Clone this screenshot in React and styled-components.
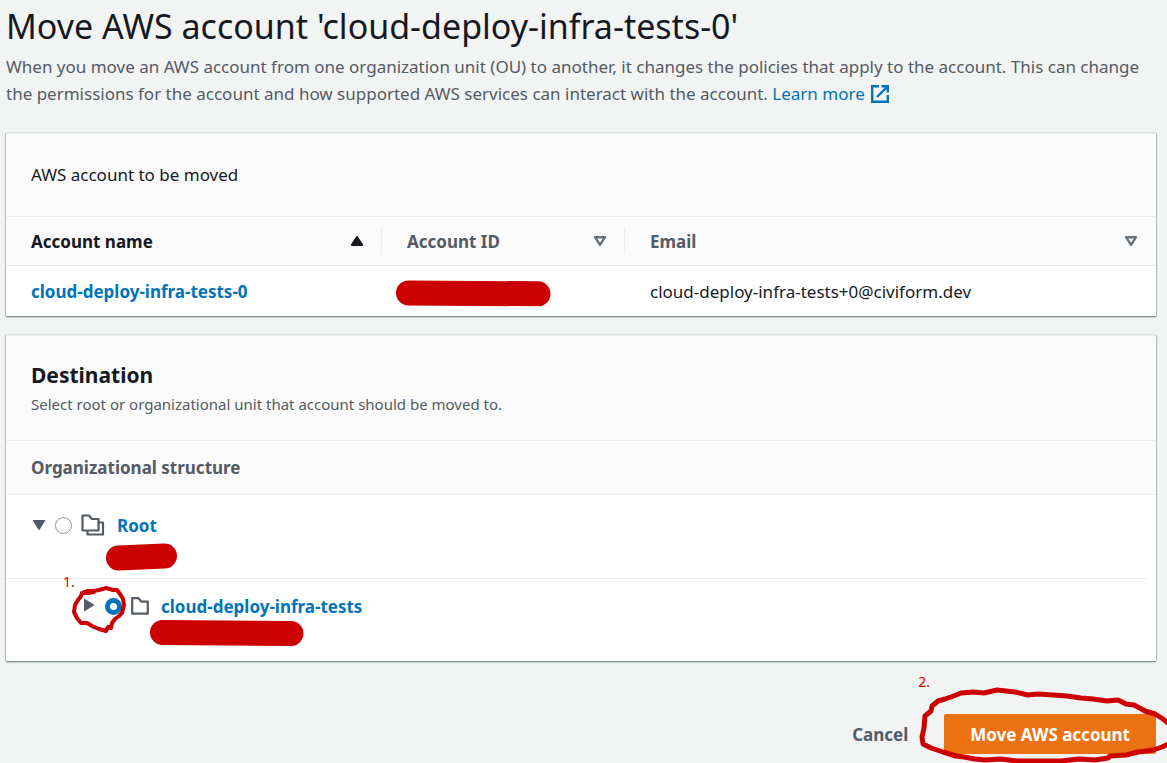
import React, { useState } from "react";
import styled, { createGlobalStyle } from "styled-components";

const GlobalStyle = createGlobalStyle`
  * { box-sizing: border-box; }
  body {
    margin: 0;
    background: #f2f3f3;
    color: #16191f;
    font-family: "Noto Sans", "Open Sans", sans-serif;
    font-size: 17px;
    line-height: 27px;
    overflow-x: hidden;
  }
  button, input { font: inherit; margin: 0; }
`;

const Page = styled.main`
  padding: 4px 11px 9px 6px;
  overflow: hidden;
`;

const Title = styled.h1`
  margin: 0;
  font-size: 34px;
  line-height: 44px;
  font-weight: 400;
`;

const Intro = styled.p`
  margin: 5px 0 27px;
  color: #545b64;
`;

const Link = styled.a`
  color: #0073bb;
  text-decoration: none;
  font-weight: ${(p) => (p.$bold ? 700 : 400)};
`;

const ExternalIcon = styled.svg`
  width: 18px;
  height: 18px;
  margin-left: 6px;
  vertical-align: -3px;
`;

const Panel = styled.section`
  position: relative;
  margin-bottom: 20px;
  background: #fff;
  box-shadow: 0 1px 0 0 #879596, 0 2px 1px 0 rgba(0, 28, 36, 0.15),
    1px 0 1px 0 rgba(0, 28, 36, 0.22), -1px 0 1px 0 rgba(0, 28, 36, 0.22);
`;

const PanelHeader = styled.header`
  padding: ${(p) => (p.$tall ? "25px" : "27px 25px 28px")};
  background: #fafafa;
  border-top: 1px solid #eaeded;
  border-bottom: 1px solid #eaeded;
  margin-top: -1px;
`;

const PanelTitle = styled.h2`
  margin: 0;
  font-size: ${(p) => (p.$large ? 21 : 17)}px;
  font-weight: ${(p) => (p.$large ? 700 : 400)};
  line-height: ${(p) => (p.$large ? 29 : 27)}px;
`;

const Hint = styled.p`
  margin: 4px 0 0;
  font-size: 15px;
  line-height: 21px;
  color: #545b64;
`;

const Table = styled.table`
  width: 100%;
  border-spacing: 0;
  table-layout: fixed;
`;

const HeadCell = styled.th`
  width: ${(p) => p.$width || "auto"};
  height: 49px;
  padding: 0;
  background: #fafafa;
  border-bottom: 1px solid #eaeded;
  color: ${(p) => (p.$active ? "#16191f" : "#545b64")};
  text-align: left;
`;

const SortButton = styled.button`
  display: flex;
  align-items: center;
  justify-content: space-between;
  width: 100%;
  height: 26px;
  padding: 0 17px 0 25px;
  border: 0;
  border-right: 1px solid ${(p) => (p.$last ? "transparent" : "#eaeded")};
  background: none;
  color: inherit;
  font-weight: 700;
`;

const Cell = styled.td`
  position: relative;
  height: 50px;
  padding: 0 25px;
`;

const ColumnLabel = styled.h3`
  margin: 0;
  padding: 13px 25px;
  background: #fafafa;
  border-bottom: 1px solid #eaeded;
  color: #545b64;
  font-size: 17px;
  line-height: 27px;
`;

const Tree = styled.ul`
  margin: 0;
  padding: 0 10px 0 0;
  list-style: none;
`;

const TreeRow = styled.li`
  position: relative;
  display: flex;
  align-items: center;
  height: ${(p) => (p.$child ? 82 : 84)}px;
  padding: 0 0 ${(p) => (p.$child ? 28 : 22)}px ${(p) => (p.$child ? 76 : 26)}px;
  border-bottom: ${(p) => (p.$child ? 0 : 1)}px solid #eaeded;
`;

const Toggle = styled.button`
  display: flex;
  align-items: center;
  width: 14px;
  height: 20px;
  padding: 0 0 2px;
  border: 0;
  background: none;
`;

const Choice = styled.label`
  display: flex;
  align-items: center;
  gap: 9px;
  margin: 0 12px 0 9px;
`;

const Radio = styled.input`
  appearance: none;
  width: 17px;
  height: 17px;
  border: 1px solid #879596;
  border-radius: 50%;
  background: #fff;
  &:checked { border: 5px solid #0073bb; }
`;

const Mark = styled.svg`
  position: absolute;
  left: ${(p) => p.$left}px;
  top: ${(p) => p.$top}px;
  overflow: visible;
  pointer-events: none;
  fill: none;
  stroke: #cc0000;
  stroke-width: ${(p) => p.$weight || 25}px;
  stroke-linecap: round;
  stroke-linejoin: round;
`;

const Step = styled.span`
  position: absolute;
  left: ${(p) => p.$left}px;
  top: ${(p) => p.$top}px;
  color: #cc0000;
  font-size: 14px;
  line-height: 16px;
`;

const Actions = styled.footer`
  display: flex;
  justify-content: flex-end;
  gap: 8px;
  padding-top: 33px;
`;

const Spot = styled.div`
  position: relative;
`;

const Button = styled.button`
  height: 40px;
  padding: 0 ${(p) => (p.$primary ? 26 : 28)}px;
  border: 0;
  border-radius: 2px;
  background: ${(p) => (p.$primary ? "#ec7211" : "transparent")};
  color: ${(p) => (p.$primary ? "#fff" : "#545b64")};
  font-weight: 700;
`;

function SortIcon({ ascending }) {
  return ascending ? (
    <svg width="14" height="12" viewBox="0 0 14 12" aria-hidden="true">
      <path d="M7 2 12.200 10H1.800Z" fill="#16191f" stroke="#16191f" strokeWidth="2" strokeLinejoin="round" />
    </svg>
  ) : (
    <svg width="14" height="12" viewBox="0 0 14 12" aria-hidden="true">
      <path d="M2 2.200h10L7 9.800Z" fill="none" stroke="#687078" strokeWidth="2.400" strokeLinejoin="round" />
    </svg>
  );
}

function Caret({ open }) {
  return (
    <svg width="14" height="14" viewBox="0 0 14 14" aria-hidden="true">
      <path
        d={open ? "M1.200 2.500h11.600L7 11.800Z" : "M2.500 1.200 11.800 7l-9.300 5.800Z"}
        fill="#545b64" stroke="#545b64" strokeLinejoin="round"
      />
    </svg>
  );
}

function FolderIcon({ stacked }) {
  return stacked ? (
    <svg width="24" height="24" viewBox="0 0 24 24" fill="none" stroke="#545b64" strokeWidth="2.200" strokeLinejoin="round" aria-hidden="true">
      <path d="M1.500 1.500H8L11 5h6.500v11.500h-16Z" />
      <path d="M18 8.500h4v12H6.500V17" />
    </svg>
  ) : (
    <svg width="18" height="18" viewBox="0 0 18 18" fill="none" stroke="#545b64" strokeWidth="2.200" strokeLinejoin="round" aria-hidden="true">
      <path d="M1.200 1.200h6.300l3 3.500h6.300v12H1.200Z" />
    </svg>
  );
}

export default function App() {
  const [selected, setSelected] = useState("child");
  return (
    <>
      <GlobalStyle />
      <Page>
        <Title>Move AWS account 'cloud-deploy-infra-tests-0'</Title>
        <Intro>
          When you move an AWS account from one organization unit (OU) to another, it changes the policies that
          apply to the account. This can change the permissions for the account and how supported AWS services can
          interact with the account.{" "}
          <Link href="#learn">
            Learn more
            <ExternalIcon viewBox="0 0 18 18" fill="none" stroke="#0073bb" strokeWidth="2.400" aria-hidden="true">
              <path d="M8 1.200H1.200v15.600h15.600V10M10.500 1.200h6.300v6.300M16.500 1.500 6 12" />
            </ExternalIcon>
          </Link>
        </Intro>

        <Panel>
          <PanelHeader>
            <PanelTitle>AWS account to be moved</PanelTitle>
          </PanelHeader>
          <Table>
            <thead>
              <tr>
                <HeadCell $width="376px" $active scope="col">
                  <SortButton>Account name<SortIcon ascending /></SortButton>
                </HeadCell>
                <HeadCell $width="243px" scope="col">
                  <SortButton>Account ID<SortIcon /></SortButton>
                </HeadCell>
                <HeadCell scope="col">
                  <SortButton $last>Email<SortIcon /></SortButton>
                </HeadCell>
              </tr>
            </thead>
            <tbody>
              <tr>
                <Cell><Link $bold href="#account">cloud-deploy-infra-tests-0</Link></Cell>
                <Cell>
                  <Mark $left={14} $top={15} width="154" height="25" aria-hidden="true">
                    <path d="M12.500 12 142 12.800" />
                  </Mark>
                </Cell>
                <Cell>cloud-deploy-infra-tests+0@civiform.dev</Cell>
              </tr>
            </tbody>
          </Table>
        </Panel>

        <Panel>
          <PanelHeader $tall>
            <PanelTitle $large>Destination</PanelTitle>
            <Hint>Select root or organizational unit that account should be moved to.</Hint>
          </PanelHeader>
          <ColumnLabel>Organizational structure</ColumnLabel>
          <Tree>
            <TreeRow>
              <Toggle aria-label="Collapse Root"><Caret open /></Toggle>
              <Choice>
                <Radio type="radio" name="destination" aria-label="Root" checked={selected === "root"} onChange={() => setSelected("root")} />
                <FolderIcon stacked />
              </Choice>
              <Link $bold href="#root">Root</Link>
              <Mark $left={100} $top={48} width="71" height="28" aria-hidden="true">
                <path d="M12.500 15 58.500 13" />
              </Mark>
            </TreeRow>
            <TreeRow $child>
              <Toggle aria-label="Expand cloud-deploy-infra-tests"><Caret /></Toggle>
              <Choice>
                <Radio type="radio" name="destination" aria-label="cloud-deploy-infra-tests" checked={selected === "child"} onChange={() => setSelected("child")} />
                <FolderIcon />
              </Choice>
              <Link $bold href="#unit">cloud-deploy-infra-tests</Link>
              <Mark $left={144} $top={41} width="154" height="26" aria-hidden="true">
                <path d="M12.500 12.500 141 13.500" />
              </Mark>
              <Step $left={57} $top={-5}>1.</Step>
              <Mark $left={64} $top={6} $weight={4} width="60" height="52" aria-hidden="true">
                <path d="M12 8 17 6 23 6 29 5 36 3 43 5 47 5 50 9 53 14 54 20 52 28 49 31 45 34 42 38 41 43 38 42 36 46 29 44 22 41 17 38 11 38 7 33 4 27 5 20 8 15 11 11 12 8 18 8 24 7" />
              </Mark>
            </TreeRow>
          </Tree>
        </Panel>

        <Actions>
          <Button>Cancel</Button>
          <Spot>
            <Button $primary>Move AWS account</Button>
            <Step $left={-26} $top={-40}>2.</Step>
            <Mark $left={-29} $top={-44} $weight={5} width="252" height="93" aria-hidden="true">
              <path d="M256 55 248 49 240 44 230 41 219 35 211 34 203 30 192 31 178 29 166 28 152 26 138 25 123 24 113 25 100 22 82 20 69 23 58 22 46 23 36 27 30 29 23 31 17 36 16 41 10 46 9 58 7 67 8 74 16 78 28 82 41 86 49 87 60 89 70 90 86 89 102 91 125 91 146 91 164 89 180 90 193 88 195 86 211 85 223 82 238 80 247 77 256 73" />
            </Mark>
          </Spot>
        </Actions>
      </Page>
    </>
  );
}
